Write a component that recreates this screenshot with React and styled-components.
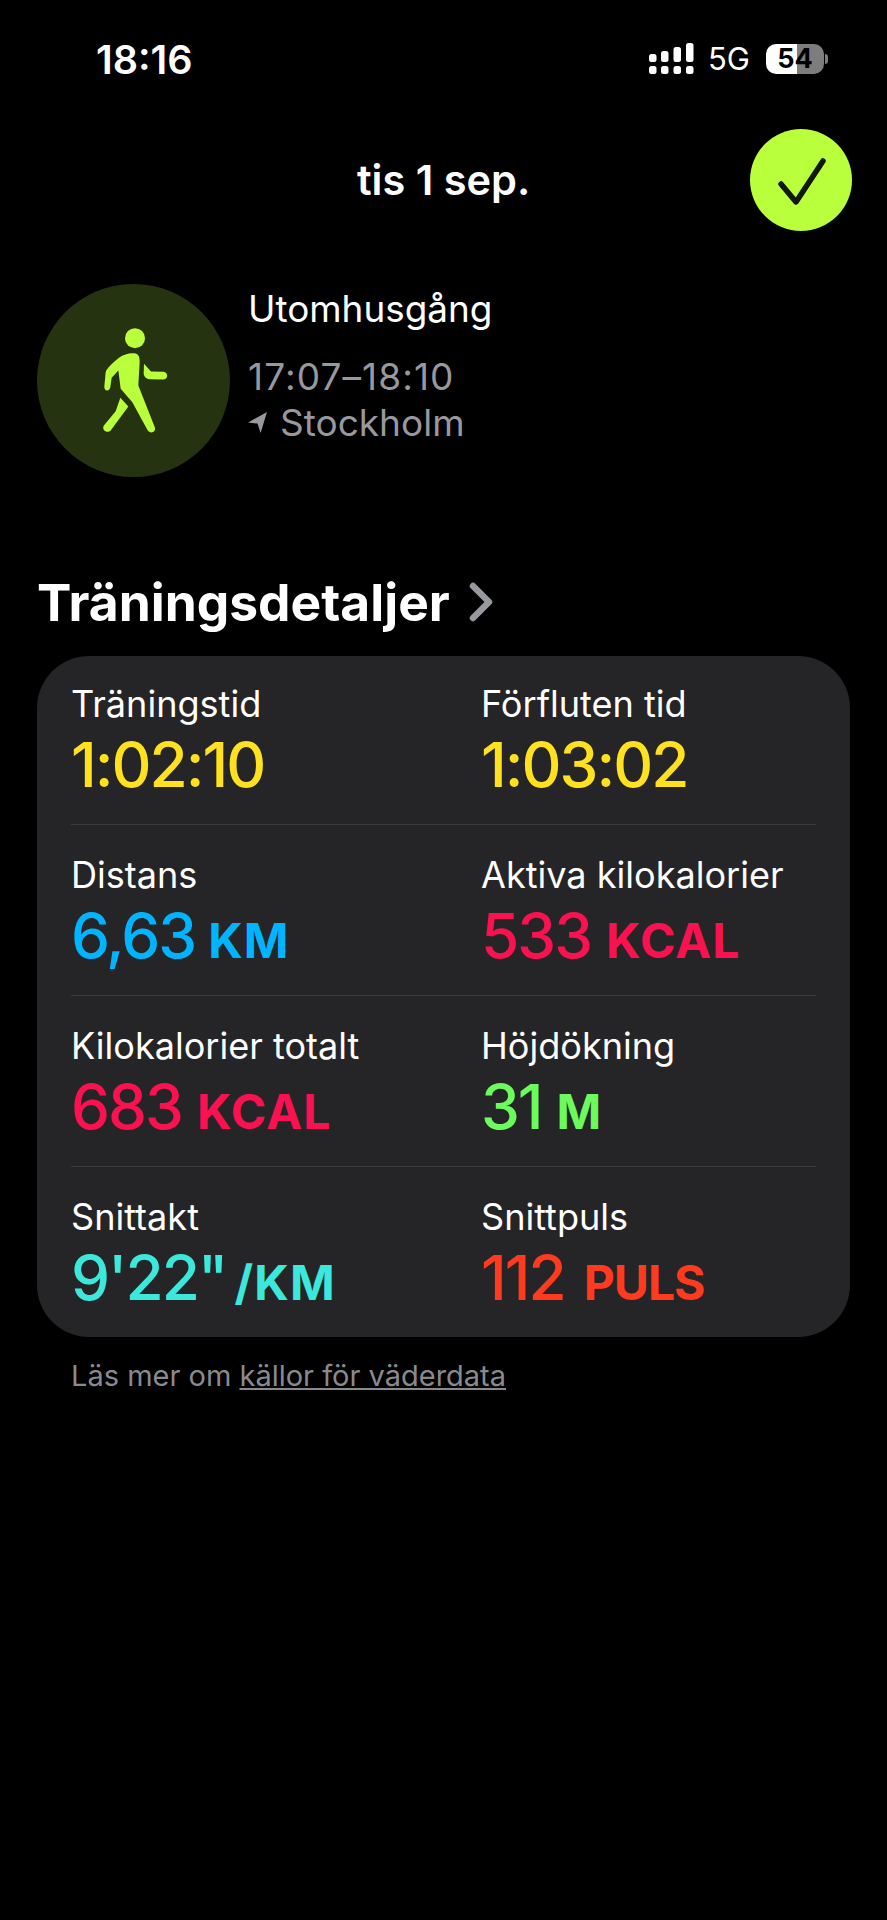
import React from "react";
import styled, { createGlobalStyle } from "styled-components";

const GlobalStyle = createGlobalStyle`
  html, body {
    margin: 0;
    padding: 0;
    background: #000;
  }
  body {
    font-family: Inter, "Noto Sans", "Liberation Sans", sans-serif;
    color: #fff;
  }
`;

const Page = styled.div`
  width: 887px;
  min-height: 1920px;
  background: #000;
  display: flex;
  flex-direction: column;
`;

const StatusBar = styled.div`
  height: 118px;
  padding: 0 63px 0 96px;
  box-sizing: border-box;
  display: flex;
  align-items: flex-start;
  justify-content: space-between;
`;

const Clock = styled.div`
  margin-top: 38px;
  font-size: 39.5px;
  line-height: 44px;
  font-weight: 600;
`;

const StatusIcons = styled.div`
  margin-top: 43px;
  display: flex;
  align-items: center;
  height: 31px;
`;

const Network = styled.span`
  margin-left: 14px;
  font-size: 31px;
  font-weight: 400;
  line-height: 31px;
`;

const Battery = styled.div`
  position: relative;
  margin-left: 16px;
  width: 58px;
  height: 30px;
  border-radius: 10px;
  background: linear-gradient(90deg, #fff 0 54%, #7d7d7d 54% 100%);
  color: #000;
  font-size: 27px;
  font-weight: 700;
  line-height: 30px;
  text-align: center;

  &::after {
    content: "";
    position: absolute;
    left: 59px;
    top: 10px;
    width: 3px;
    height: 10px;
    border-radius: 0 3px 3px 0;
    background: #7d7d7d;
  }
`;

const TopBar = styled.div`
  position: relative;
  height: 124px;
  display: flex;
  align-items: center;
  justify-content: center;
`;

const DateTitle = styled.div`
  font-size: 41.5px;
  font-weight: 600;
  line-height: 44px;
`;

const DoneButton = styled.div`
  position: absolute;
  left: 750px;
  top: 11px;
  width: 102px;
  height: 102px;
  border-radius: 50%;
  background: #b9ff3c;
  display: flex;
  align-items: center;
  justify-content: center;
`;

const Workout = styled.div`
  margin-top: 42px;
  padding-left: 37px;
  display: flex;
  align-items: flex-start;
  gap: 18px;
`;

const WorkoutBadge = styled.div`
  width: 193px;
  height: 193px;
  border-radius: 50%;
  background: #263311;
  display: flex;
  align-items: center;
  justify-content: center;
  flex-shrink: 0;
`;

const WorkoutInfo = styled.div`
  display: flex;
  flex-direction: column;
  padding-top: 2px;
`;

const WorkoutName = styled.div`
  font-size: 36.9px;
  line-height: 46px;
  margin-bottom: 20px;
`;

const WorkoutMeta = styled.div`
  font-size: 37px;
  line-height: 47px;
  color: #98989f;
  display: flex;
  align-items: center;
  gap: 13px;
`;

const WorkoutTime = styled(WorkoutMeta)`
  letter-spacing: 1.1px;
  padding-top: 1px;
  margin-bottom: -1px;
`;

const SectionHeader = styled.div`
  margin-top: 94px;
  padding-left: 37px;
  display: flex;
  align-items: center;
  gap: 18px;
  height: 62px;
`;

const SectionTitle = styled.h2`
  margin: 0;
  font-size: 51.5px;
  line-height: 62px;
  font-weight: 700;
`;

const Card = styled.div`
  margin: 23px 0 0 37px;
  width: 813px;
  box-sizing: border-box;
  padding: 0 34px;
  background: #252527;
  border-radius: 52px;
  display: flex;
  flex-direction: column;
`;

const MetricRow = styled.div`
  display: grid;
  grid-template-columns: 410px 1fr;
  height: ${(p) => (p.$first ? 168 : 171)}px;
  box-sizing: border-box;
  padding-top: ${(p) => (p.$first ? 25 : 27)}px;
  border-top: ${(p) => (p.$first ? "none" : "1px solid #3a3a3c")};
`;

const Metric = styled.div`
  display: flex;
  flex-direction: column;
`;

const MetricLabel = styled.div`
  font-size: 36.1px;
  line-height: 46px;
  font-weight: 400;
  white-space: nowrap;
  margin-bottom: 2px;
`;

const MetricValue = styled.div`
  font-size: 62px;
  line-height: 72px;
  font-weight: 500;
  letter-spacing: -2px;
  color: ${(p) => p.$color};
  white-space: nowrap;
`;

const Unit = styled.span`
  font-size: 48px;
  font-weight: 700;
  letter-spacing: ${(p) => p.$spacing ?? 1.2}px;
  margin-left: ${(p) => p.$gap ?? 15}px;
  text-transform: uppercase;
`;

const Footnote = styled.div`
  margin: 22px 0 0 71px;
  font-size: 29px;
  line-height: 34px;
  color: #8a8a8e;
`;

const FootLink = styled.a`
  color: #8a8a8e;
  text-decoration: underline;
`;

const rows = [
  [
    { label: "Träningstid", value: "1:02:10", color: "#ffe11f" },
    { label: "Förfluten tid", value: "1:03:02", color: "#ffe11f" },
  ],
  [
    { label: "Distans", value: "6,63", unit: "km", color: "#00b4ff", gap: 13 },
    { label: "Aktiva kilokalorier", value: "533", unit: "kcal", color: "#fa1150" },
  ],
  [
    { label: "Kilokalorier totalt", value: "683", unit: "kcal", color: "#fa1150" },
    { label: "Höjdökning", value: "31", unit: "m", color: "#6cfb5c" },
  ],
  [
    { label: "Snittakt", value: "9'22\"", unit: "/km", color: "#3ce8dc", gap: 8 },
    { label: "Snittpuls", value: "112", unit: "puls", color: "#ff3b1f", gap: 19, spacing: -1 },
  ],
];

function SignalIcon() {
  return (
    <svg width="45" height="31" viewBox="0 0 45 31" fill="#fff">
      <rect x="0" y="23" width="7.5" height="8" rx="2.5" />
      <rect x="12" y="23" width="7.5" height="8" rx="2.5" />
      <rect x="24.5" y="23" width="7.5" height="8" rx="2.5" />
      <rect x="37" y="23" width="7.5" height="8" rx="2.5" />
      <rect x="0" y="11" width="7.5" height="8" rx="2.5" />
      <rect x="12" y="8" width="7.5" height="11" rx="2.5" />
      <rect x="24.5" y="4" width="7.5" height="15" rx="2.5" />
      <rect x="37" y="0" width="7.5" height="19" rx="2.5" />
    </svg>
  );
}

function CheckIcon() {
  return (
    <svg width="56" height="56" viewBox="0 0 56 56" fill="none">
      <path d="M8 32 L23 50 L50 9" stroke="#10180a" strokeWidth="5.5" strokeLinecap="round" strokeLinejoin="round" />
    </svg>
  );
}

function WalkIcon() {
  return (
    <svg width="70" height="107" viewBox="240 170 210 320" fill="#b9ff3c">
      <circle cx="348" cy="203" r="30" />
      <path d="M300 262 C315 250 335 246 350 249 C360 252 362 262 362 275 L358 345 L408 472 C410 488 392 490 385 478 L340 395 L305 355 L298 300 L278 322 L274 350 C270 365 255 362 256 348 L260 305 C262 295 280 278 300 262 Z" />
      <path d="M304 382 L328 408 L275 480 C265 490 248 480 254 466 L290 422 Z" />
      <path d="M375 280 L396 303 L434 304 C448 306 448 326 434 327 L392 326 C382 325 374 318 374 308 Z" />
    </svg>
  );
}

function LocationIcon() {
  return (
    <svg width="19" height="21" viewBox="0 0 18 20" fill="#98989f">
      <path d="M18 0 L12 20 L9 11 L0 10 Z" />
    </svg>
  );
}

function ChevronIcon() {
  return (
    <svg width="26" height="40" viewBox="0 0 26 40" fill="none">
      <path d="M5 4 L21 20 L5 36" stroke="#98989f" strokeWidth="6.5" strokeLinecap="round" strokeLinejoin="round" />
    </svg>
  );
}

export default function App() {
  return (
    <Page>
      <GlobalStyle />
      <StatusBar>
        <Clock>18:16</Clock>
        <StatusIcons>
          <SignalIcon />
          <Network>5G</Network>
          <Battery>54</Battery>
        </StatusIcons>
      </StatusBar>

      <TopBar>
        <DateTitle>tis 1 sep.</DateTitle>
        <DoneButton>
          <CheckIcon />
        </DoneButton>
      </TopBar>

      <Workout>
        <WorkoutBadge>
          <WalkIcon />
        </WorkoutBadge>
        <WorkoutInfo>
          <WorkoutName>Utomhusgång</WorkoutName>
          <WorkoutTime>17:07–18:10</WorkoutTime>
          <WorkoutMeta>
            <LocationIcon />
            Stockholm
          </WorkoutMeta>
        </WorkoutInfo>
      </Workout>

      <SectionHeader>
        <SectionTitle>Träningsdetaljer</SectionTitle>
        <ChevronIcon />
      </SectionHeader>

      <Card>
        {rows.map((row, i) => (
          <MetricRow key={i} $first={i === 0}>
            {row.map((m) => (
              <Metric key={m.label}>
                <MetricLabel>{m.label}</MetricLabel>
                <MetricValue $color={m.color}>
                  {m.value}
                  {m.unit && (
                    <Unit $gap={m.gap} $spacing={m.spacing}>
                      {m.unit}
                    </Unit>
                  )}
                </MetricValue>
              </Metric>
            ))}
          </MetricRow>
        ))}
      </Card>

      <Footnote>
        Läs mer om <FootLink>källor för väderdata</FootLink>
      </Footnote>
    </Page>
  );
}
